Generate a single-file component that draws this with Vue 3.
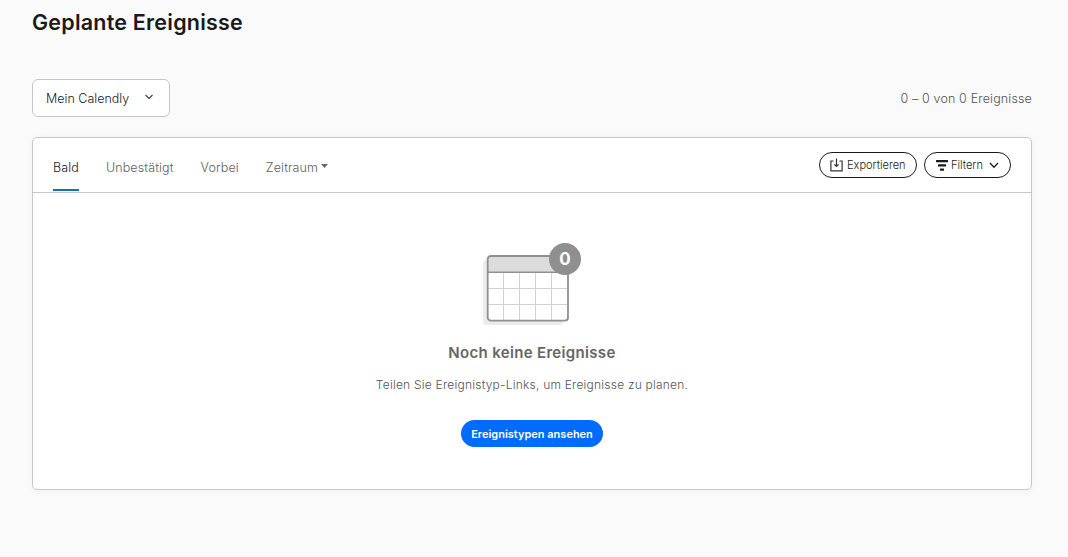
<script setup>
const tabs = [
  { label: 'Bald', active: true },
  { label: 'Unbestätigt' },
  { label: 'Vorbei' },
  { label: 'Zeitraum', caret: true },
]
</script>

<template>
  <main class="page">
    <h1 class="title">Geplante Ereignisse</h1>
    <div class="toolbar">
      <button class="select">
        <span>Mein Calendly</span>
        <svg width="10" height="6" viewBox="0 0 10 6"><path d="M1.5 1 5 4.4 8.5 1" fill="none" stroke="#444" stroke-width="1.2" /></svg>
      </button>
      <span class="count">0 – 0 von 0 Ereignisse</span>
    </div>
    <section class="card">
      <header class="head">
        <nav class="tabs">
          <a v-for="t in tabs" :key="t.label" class="tab" :class="{ active: t.active }">
            <span>{{ t.label }}</span>
            <svg v-if="t.caret" class="caret" width="7" height="4" viewBox="0 0 7 4"><path d="M0 0h7L3.5 4z" fill="#666" /></svg>
          </a>
        </nav>
        <div class="actions">
          <button class="pill export">
            <svg width="13" height="14" viewBox="0 0 13 14" fill="none" stroke="#333" stroke-width="1.2">
              <path d="M3.500 3H.9v9.800h11.200V3H9.500M6.500 .4v8M4.400 6.300 6.500 8.500 8.600 6.300" />
            </svg>
            <span>Exportieren</span>
          </button>
          <button class="pill filter">
            <svg width="12" height="11" viewBox="0 0 12 11" fill="#1a1a1a">
              <rect width="12" height="2.200" rx=".5" />
              <rect x="2" y="4.300" width="8" height="2.200" rx=".5" />
              <rect x="4" y="8.600" width="4" height="2.200" rx=".5" />
            </svg>
            <span>Filtern</span>
            <svg class="chev" width="10" height="7" viewBox="0 0 10 7"><path d="M1 1l4 4.2L9 1" fill="none" stroke="#1a1a1a" stroke-width="1.3" /></svg>
          </button>
        </div>
      </header>
      <div class="empty">
        <div class="art">
          <svg width="87" height="71" viewBox="0 0 87 71">
            <rect x="0" y="5" width="80" height="65" rx="4" fill="#ececec" />
            <rect x="4.500" y="1" width="80.500" height="64.500" rx="3" fill="#fff" />
            <path d="M5 17V4a3 3 0 0 1 3-3h74a3 3 0 0 1 3 3v13z" fill="#dcdcdc" />
            <path d="M20.500 18v47M36.500 18v47M52.500 18v47M68.500 18v47M5 33.500h79M5 49.500h79" stroke="#d2d2d2" fill="none" />
            <path d="M5 17.300h80" stroke="#8f8f8f" stroke-width="1.600" />
            <rect x="4.700" y="1" width="80.300" height="64.600" rx="3" fill="none" stroke="#8f8f8f" stroke-width="1.800" />
          </svg>
          <span class="badge">0</span>
        </div>
        <h2 class="subtitle">Noch keine Ereignisse</h2>
        <p class="hint">Teilen Sie Ereignistyp-Links, um Ereignisse zu planen.</p>
        <button class="primary">Ereignistypen ansehen</button>
      </div>
    </section>
  </main>
</template>

<style>
body { margin: 0; background: #fafafa; }
</style>

<style scoped>
.page { box-sizing: border-box; width: 1068px; height: 557px; padding: 8px 36px 0 32px; background: #fafafa; font-family: Inter, Lato, sans-serif; font-weight: 300; color: #1a1a1a; white-space: nowrap; overflow: hidden; }
h1, h2, p { margin: 0; }
button { box-sizing: border-box; font-family: inherit; font-weight: inherit; padding: 0; margin: 0; color: inherit; display: flex; align-items: center; }
svg { display: block; flex: none; }
.title { font-size: 21.500px; line-height: 28px; font-weight: 600; letter-spacing: .22px; }
.toolbar { display: flex; justify-content: space-between; align-items: center; height: 38px; margin-top: 43px; }
.select { width: 138px; height: 38px; padding: 0 15px 0 13px; justify-content: space-between; background: #fff; border: 1px solid #c6c6c6; border-radius: 6px; font-size: 12.500px; }
.select svg { margin-top: -3px; }
.count { font-size: 12.500px; color: #555; letter-spacing: .15px; }
.card { box-sizing: border-box; width: 1000px; height: 353px; margin-top: 20px; background: #fff; border: 1px solid #c8c8c8; border-radius: 5px; box-shadow: 0 1px 8px rgba(0,0,0,.04); }
.head { box-sizing: border-box; height: 55px; padding: 0 20px; display: flex; justify-content: space-between; border-bottom: 1px solid #c8c8c8; }
.tabs { display: flex; gap: 27px; height: 53px; }
.tab { box-sizing: border-box; display: flex; align-items: center; gap: 3px; padding-top: 8px; border-bottom: 2px solid transparent; font-size: 12.500px; color: #606060; letter-spacing: .12px; }
.tab.active { color: #1a1a1a; border-color: #1473b8; }
.caret { margin-top: -3px; }
.actions { display: flex; gap: 7px; padding-top: 14px; }
.pill { height: 26px; background: #fff; border: 1px solid #1a1a1a; border-radius: 13px; font-size: 11px; }
.export { width: 98px; padding-left: 10px; gap: 4px; }
.filter { width: 87px; padding-left: 11px; gap: 3px; }
.chev { margin-left: 3px; }
.empty { display: flex; flex-direction: column; align-items: center; padding-top: 50px; }
.art { position: relative; width: 100px; height: 83px; box-sizing: border-box; padding: 12px 0 0 1px; }
.badge { position: absolute; left: 67px; top: 0; width: 32px; height: 32px; border-radius: 50%; background: #8f8f8f; color: #fff; font-size: 17px; line-height: 32px; font-weight: 700; text-align: center; }
.subtitle { margin-top: 16px; font-size: 15px; line-height: 22px; font-weight: 600; color: #666; letter-spacing: .33px; }
.hint { margin-top: 12px; font-size: 12px; line-height: 18px; color: #555; letter-spacing: .22px; }
.primary { margin-top: 26px; width: 142px; height: 27px; justify-content: center; border: 0; border-radius: 14px; background: #006bff; color: #fff; font-size: 11px; font-weight: 600; }
</style>
